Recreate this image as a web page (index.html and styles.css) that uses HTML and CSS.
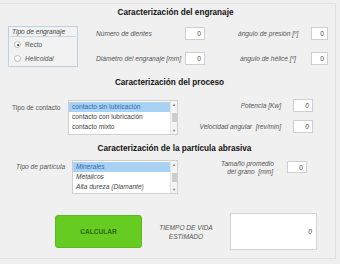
FILE: index.html
```html
<!DOCTYPE html>
<html>
<head>
<meta charset="utf-8">
<link rel="stylesheet" href="styles.css">
</head>
<body>
<div class="frame">
  <div class="sec1">
    <div class="title t1">Caracterización del engranaje</div>
    <div class="row1">
      <div class="group">
        <div class="group-head">Tipo de engranaje</div>
        <div class="radio r-on"><span class="dot"></span>Recto</div>
        <div class="radio"><span class="dot"></span>Helicoidal</div>
      </div>
      <div class="col1">
        <div class="field"><span class="lbl w89">Número de dientes</span><span class="box w20">0</span></div>
        <div class="field"><span class="lbl w89">Diámetro del engranaje [mm]</span><span class="box w20">0</span></div>
      </div>
      <div class="col2">
        <div class="field"><span class="lbl w72">ángulo de presión [º]</span><span class="box w18">0</span></div>
        <div class="field"><span class="lbl w72 ind">ángulo de hélice [º]</span><span class="box w18">0</span></div>
      </div>
    </div>
  </div>

  <div class="title t2">Caracterización del proceso</div>
  <div class="row2">
    <div class="side-lbl up">Tipo de contacto</div>
    <div class="list l1">
      <div class="items">
        <div class="item sel">contacto sin lubricación</div>
        <div class="item">contacto con lubricación</div>
        <div class="item">contacto mixto</div>
      </div>
      <div class="sbar"><span class="arr">&#9650;</span><span class="thumb"></span><span class="arr">&#9660;</span></div>
    </div>
    <div class="col3">
      <div class="field f3"><span class="lbl rt w105">Potencia [Kw]</span><span class="box w20 it">0</span></div>
      <div class="field f3"><span class="lbl rt w105">Velocidad angular&nbsp; [rev/min]</span><span class="box w20 it">0</span></div>
    </div>
  </div>

  <div class="title t3">Caracterización de la partícula abrasiva</div>
  <div class="row3">
    <div class="side-lbl it2">Tipo de partícula</div>
    <div class="list l2">
      <div class="items it">
        <div class="item sel">Minerales</div>
        <div class="item">Metálicos</div>
        <div class="item">Alta dureza (Diamante)</div>
      </div>
      <div class="sbar"><span class="arr">&#9650;</span><span class="thumb"></span><span class="arr">&#9660;</span></div>
    </div>
    <div class="grain">
      <div class="lbl2">Tamaño promedio<br>del grano&nbsp; [mm]</div>
      <span class="box w20">0</span>
    </div>
  </div>

  <div class="row4">
    <button class="calc">CALCULAR</button>
    <div class="life">TIEMPO DE VIDA<br>ESTIMADO</div>
    <div class="out">0</div>
  </div>
</div>
</body>
</html>
```
FILE: styles.css
```css
* { box-sizing: border-box; }
html, body { margin: 0; padding: 0; }
body {
  width: 340px; height: 264px; overflow: hidden;
  background: #f0f0f0;
  font-family: "Liberation Sans", Arial, sans-serif;
  color: #444;
}
.frame {
  margin-top: 3px;
  width: 336px; height: 256px;
  border-top: 1px solid #e2e2e2;
  border-right: 1px solid #e2e2e2;
  border-bottom: 1px solid #e2e2e2;
}
.title {
  font-weight: bold; font-size: 8.2px; color: #111;
  text-align: center; line-height: 11px;
}
.t1 { margin-top: 3px; padding-left: 16px; }
.t2 { margin-top: 10px; padding-left: 4px; }
.t3 { margin-top: 8px; padding-left: 14px; }

.row1 { display: flex; margin-top: 8px; }
.group {
  margin-left: 8px; width: 70px; height: 41px;
  border: 1px solid #b9d0e2; background: #f2f2f2;
  font-size: 6.6px; font-style: italic; color: #444;
}
.group-head {
  height: 10px; line-height: 9px; padding-left: 2px;
  border-bottom: 1px solid #c5d8e6; margin: 0 1px;
}
.radio { display: flex; align-items: center; height: 14px; padding-left: 5px; font-style: normal; color: #555; }
.radio + .radio { font-style: italic; }
.group-head + .radio { margin-top: 1px; height: 13px; }
.dot {
  width: 7px; height: 7px; border-radius: 50%;
  border: 1px solid #bbb; background: #fff; margin-right: 4px; position: relative;
}
.r-on .dot::after {
  content: ""; position: absolute; left: 1.5px; top: 1.5px;
  width: 2px; height: 2px; border-radius: 50%; background: #333;
}
.col1 { margin-left: 18px; display: flex; flex-direction: column; gap: 12px; margin-top: 1px; }
.col2 { margin-left: 33px; display: flex; flex-direction: column; gap: 12px; margin-top: 1px; }
.field { display: flex; align-items: center; height: 13px; }
.lbl { font-size: 6.6px; font-style: italic; color: #555; white-space: nowrap; }
.w89 { width: 89px; }
.w72 { width: 73px; }
.ind { padding-left: 2px; }
.w105 { width: 115px; }
.rt { text-align: right; padding-right: 12px; }
.box {
  display: inline-block; height: 13px; background: #fff;
  border: 1px solid #cfcfcf; font-size: 6.6px; line-height: 11px;
  text-align: right; padding-right: 3px; color: #444;
}
.w20 { width: 20px; }
.w18 { width: 17px; }
.it { font-style: italic; }

.row2 { display: flex; margin-top: 12px; height: 35px; }
.side-lbl { font-size: 6.6px; color: #555; white-space: nowrap; }
.up { margin-left: 12px; width: 56px; margin-top: 4px; }
.list {
  display: flex; background: #fff; border: 1px solid #cfcfcf; height: 35px;
}
.l1 { width: 110px; }
.l2 { width: 106px; height: 34px; }
.items { flex: 1; font-size: 6.6px; color: #444; }
.item { height: 10px; line-height: 10px; padding-left: 3px; white-space: nowrap; }
.items .item:first-child { margin-top: 1px; }
.sel { background: #a9d1f3; color: #2b6cb0; }
.sbar {
  width: 7px; background: #f4f4f4; border-left: 1px solid #e6e6e6;
  display: flex; flex-direction: column; align-items: center; justify-content: space-between;
}
.arr { font-size: 4px; color: #777; line-height: 7px; height: 7px; }
.thumb { width: 5px; flex: 1; background: #cdcdcd; margin: 1px 0; max-height: 9px; }
.col3 { margin-left: 0; display: flex; flex-direction: column; gap: 8px; margin-top: -1px; }

.row3 { display: flex; margin-top: 6px; height: 34px; }
.it2 { font-style: italic; margin-left: 16px; width: 56px; margin-top: 3px; }
.grain { display: flex; align-items: flex-start; margin-left: 43px; }
.lbl2 { font-size: 6.6px; font-style: italic; color: #555; text-align: right; line-height: 8px; white-space: nowrap; width: 52px; margin-right: 14px; margin-top: 0; }
.grain .box { height: 12px; width: 20px; margin-top: 1px; }

.row4 { display: flex; align-items: center; margin-top: 19px; }
.calc {
  margin-left: 55px; width: 87px; height: 33px;
  background: #66cc22; border: 1px solid #5cb820; border-radius: 3px;
  font-family: "Liberation Sans", Arial, sans-serif; font-size: 6.6px; font-weight: bold;
  color: #2a6a10; padding: 0;
}
.life {
  width: 88px; text-align: center; font-size: 6.6px; font-style: italic; color: #555; line-height: 9px;
}
.out {
  width: 87px; height: 37px; background: #fff; border: 1px solid #d4d4d4;
  font-size: 6.6px; font-style: italic; text-align: right; line-height: 35px; padding-right: 4px; color: #444;
}
```
